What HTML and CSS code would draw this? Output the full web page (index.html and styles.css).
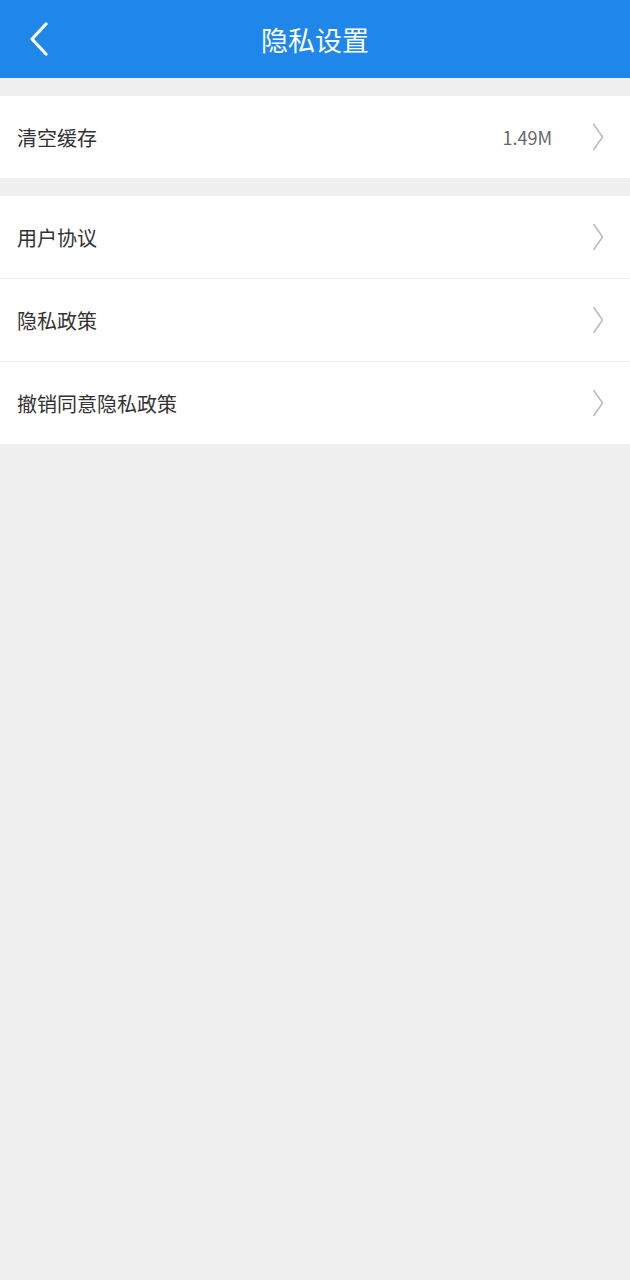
FILE: index.html
```html
<!DOCTYPE html>
<html lang="zh-CN">
<head>
  <meta charset="UTF-8" />
  <title>隐私设置</title>
  <link rel="stylesheet" href="styles.css">
</head>
<body>
  <header class="topbar">
    <a class="back" href="#">
      <svg width="22" height="34" viewBox="0 0 22 34"><path d="M18 2 L4 17 L18 32" fill="none" stroke="#fff" stroke-width="3.2" stroke-linecap="round" stroke-linejoin="round"/></svg>
    </a>
    <h1>隐私设置</h1>
  </header>

  <section class="group">
    <div class="row">
      <span class="label">清空缓存</span>
      <span class="value">1.49M</span>
      <svg class="arrow" width="12" height="30" viewBox="0 0 12 30"><path d="M1.5 2 L10.5 15 L1.5 28" fill="none" stroke="#bcbcbc" stroke-width="1.6"/></svg>
    </div>
  </section>

  <section class="group">
    <div class="row">
      <span class="label">用户协议</span>
      <svg class="arrow" width="12" height="30" viewBox="0 0 12 30"><path d="M1.5 2 L10.5 15 L1.5 28" fill="none" stroke="#bcbcbc" stroke-width="1.6"/></svg>
    </div>
    <div class="row">
      <span class="label">隐私政策</span>
      <svg class="arrow" width="12" height="30" viewBox="0 0 12 30"><path d="M1.5 2 L10.5 15 L1.5 28" fill="none" stroke="#bcbcbc" stroke-width="1.6"/></svg>
    </div>
    <div class="row">
      <span class="label">撤销同意隐私政策</span>
      <svg class="arrow" width="12" height="30" viewBox="0 0 12 30"><path d="M1.5 2 L10.5 15 L1.5 28" fill="none" stroke="#bcbcbc" stroke-width="1.6"/></svg>
    </div>
  </section>
</body>
</html>
```

FILE: styles.css
```css
body { margin: 0; background: #f0f0f0; font-family: "Noto Sans CJK SC", "Noto Sans", sans-serif; min-height: 1280px; }
.topbar { height: 78px; background: #1f87ea; display: flex; align-items: center; justify-content: center; position: relative; }
.topbar h1 { margin: 0; color: #fff; font-size: 27px; font-weight: normal; }
.back { position: absolute; left: 28px; top: 22px; display: block; }
.group { background: #fff; margin-top: 18px; }
.row { height: 82px; display: flex; align-items: center; padding: 0 26px 0 17px; border-top: 1px solid #efefef; }
.row:first-child { border-top: none; }
.label { flex: 1; font-size: 20px; color: #333; }
.value { font-size: 18px; color: #666; margin-right: 40px; }
.arrow { display: block; }
```
